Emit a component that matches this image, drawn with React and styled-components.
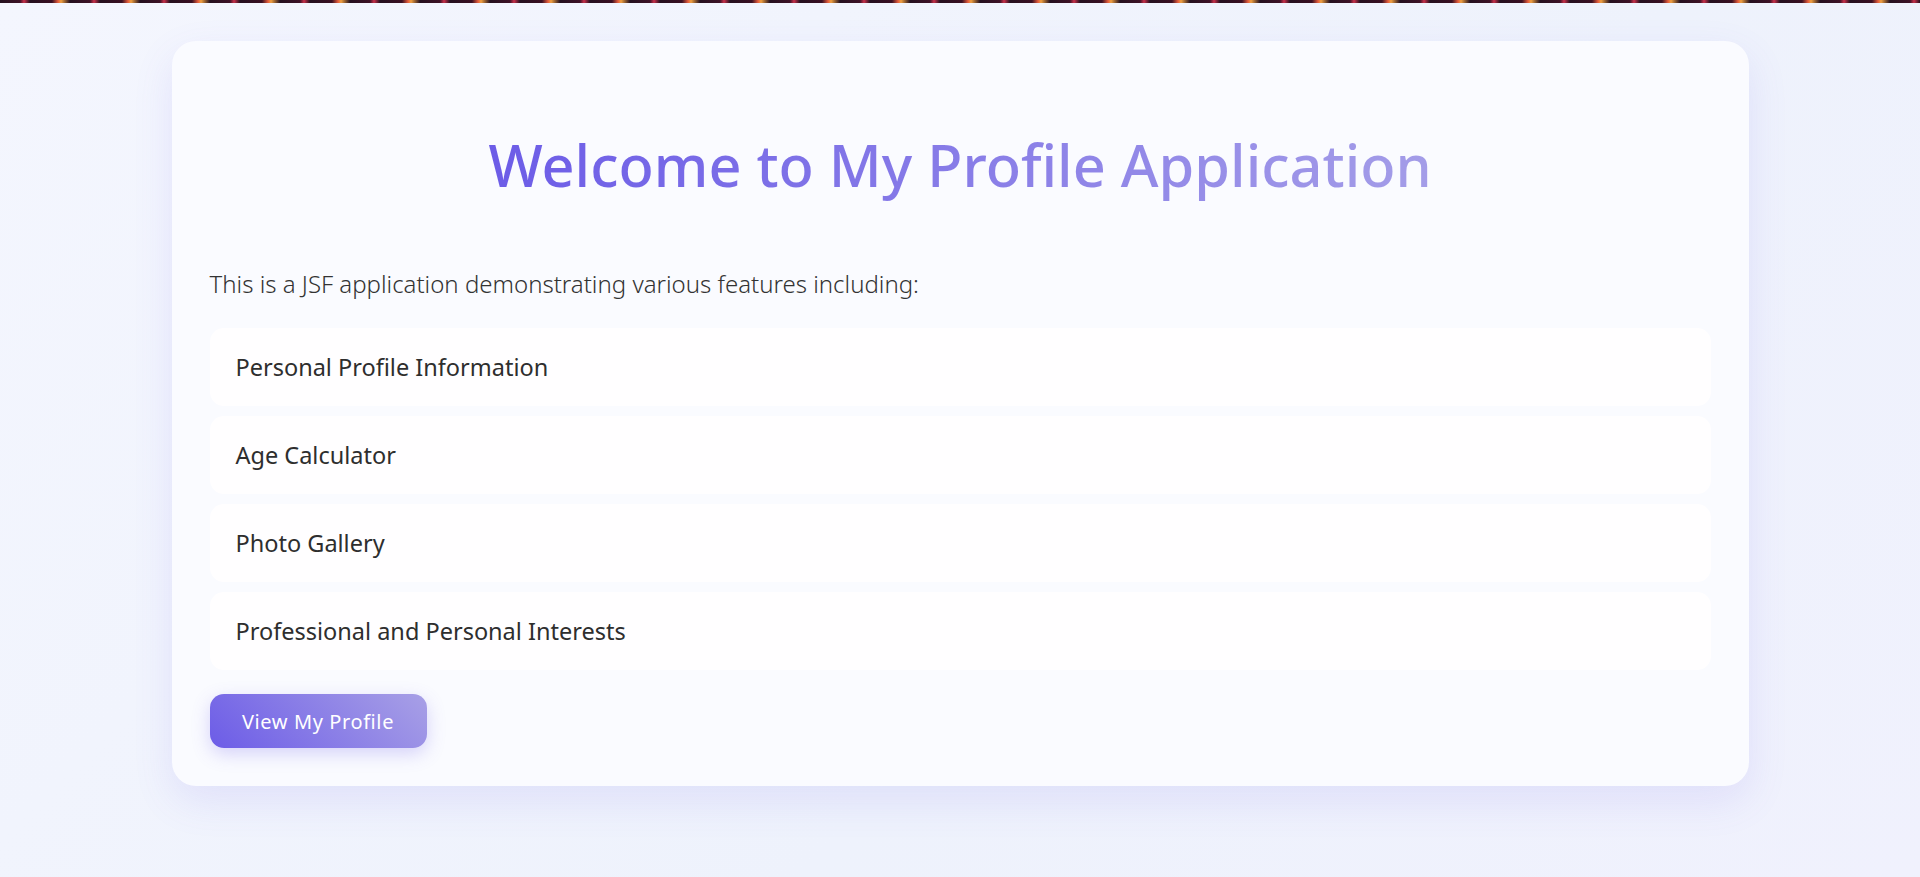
import styled, { createGlobalStyle } from 'styled-components';

const GlobalStyle = createGlobalStyle`
  html, body {
    margin: 0;
    padding: 0;
  }
  body {
    min-height: 877px;
    font-family: "Noto Sans", "Open Sans", sans-serif;
    background: linear-gradient(135deg, #f4f6fe 0%, #eef2fc 60%, #f0f1fd 100%);
    color: #333;
  }
`;

const Strip = styled.div`
  height: 3px;
  background: repeating-linear-gradient(
    90deg,
    #24101f 0px,
    #3d1226 20px,
    #c8304a 24px,
    #24101f 30px,
    #3a0f22 52px,
    #e25a3c 58px,
    #f0a040 61px,
    #24101f 70px
  );
`;

const Page = styled.main`
  display: flex;
  justify-content: center;
  padding: 38px 0 60px;
`;

const Card = styled.section`
  width: 1577px;
  box-sizing: border-box;
  padding: 89px 38px 38px;
  background: #fafbff;
  border-radius: 24px;
  box-shadow: 0 15px 40px rgba(108, 92, 231, 0.12);
`;

const Title = styled.h1`
  margin: 0 0 67px;
  text-align: center;
  font-size: 57.7px;
  font-weight: 500;
  line-height: 1.2;
  span {
    background: linear-gradient(90deg, #6c5ce7 0%, #a49de8 100%);
    -webkit-background-clip: text;
    background-clip: text;
    color: transparent;
  }
`;

const Intro = styled.p`
  margin: 0 0 26px;
  font-size: 24px;
  font-weight: 300;
  color: #333;
  line-height: 36px;
`;

const List = styled.ul`
  list-style: none;
  margin: 0 0 24px;
  padding: 0;
  display: flex;
  flex-direction: column;
  gap: 10px;
`;

const Item = styled.li`
  height: 78px;
  display: flex;
  align-items: center;
  padding: 0 26px;
  background: #fffeff;
  border-radius: 14px;
  font-size: 23.5px;
  color: #2e2e2e;
`;

const Button = styled.button`
  width: 217px;
  height: 54px;
  border: 0;
  border-radius: 14px;
  font-family: inherit;
  font-size: 20px;
  letter-spacing: 0.6px;
  color: #fff;
  background: linear-gradient(45deg, #6c5ce7 0%, #a8a0e6 100%);
  box-shadow: 0 6px 18px rgba(108, 92, 231, 0.25);
  cursor: pointer;
`;

const features = [
  'Personal Profile Information',
  'Age Calculator',
  'Photo Gallery',
  'Professional and Personal Interests',
];

export default function App() {
  return (
    <>
      <GlobalStyle />
      <Strip />
      <Page>
        <Card>
          <Title>
            <span>Welcome to My Profile Application</span>
          </Title>
          <Intro>This is a JSF application demonstrating various features including:</Intro>
          <List>
            {features.map(f => (
              <Item key={f}>{f}</Item>
            ))}
          </List>
          <Button>View My Profile</Button>
        </Card>
      </Page>
    </>
  );
}
